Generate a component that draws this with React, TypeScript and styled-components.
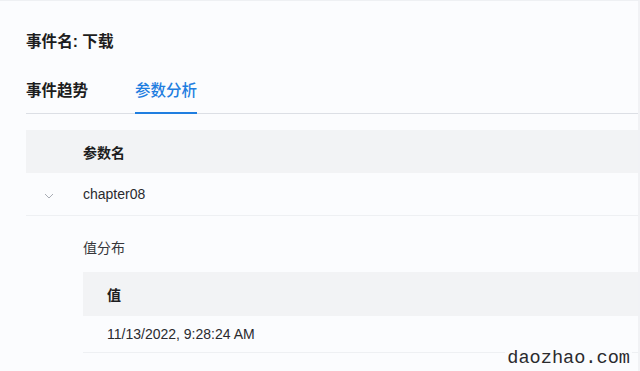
import React from "react";
import styled, { createGlobalStyle } from "styled-components";

const Global = createGlobalStyle`
  html, body { margin: 0; padding: 0; background: #fbfcfe; }
  body { font-family: "Liberation Sans", "Noto Sans CJK SC", Arial, sans-serif; color: #1f1f22; }
`;

const Page = styled.div`
  position: relative;
  width: 640px;
  height: 371px;
  overflow: hidden;
  box-sizing: border-box;
  background: #fbfcfe;
  border-top: 1px solid #eef0f3;
  border-right: 2px solid #f1f2f5;
  padding: 28px 0 0 26px;
`;

const Title = styled.h1`
  margin: 0;
  font-size: 15.6px;
  font-weight: 600;
  line-height: 26px;
  color: #1d1d20;
`;

const Tabs = styled.div`
  display: flex;
  gap: 47px;
  margin-top: 25px;
  border-bottom: 1px solid #dcdfe5;
`;

const Tab = styled.div<{ $active?: boolean }>`
  font-size: 15.5px;
  font-weight: ${(p) => (p.$active ? 500 : 600)};
  color: ${(p) => (p.$active ? "#1f7ee0" : "#1d1d20")};
  line-height: 22px;
  padding-bottom: 10px;
  margin-bottom: -1px;
  border-bottom: 2px solid ${(p) => (p.$active ? "#1f7ee0" : "transparent")};
`;

const Table = styled.div`
  margin-top: 16px;
  display: flex;
  flex-direction: column;
`;

const HeadRow = styled.div<{ $indent: number; $h: number }>`
  display: flex;
  align-items: center;
  height: ${(p) => p.$h}px;
  padding-left: ${(p) => p.$indent}px;
  background: #f2f3f5;
  font-size: 14px;
  font-weight: 600;
  color: #1d1d20;
`;

const BodyRow = styled.div<{ $h: number }>`
  display: flex;
  align-items: center;
  height: ${(p) => p.$h}px;
  border-bottom: 1px solid #eef0f3;
  font-size: 14px;
  color: #2a2a2e;
`;

const ExpandCell = styled.div`
  width: 57px;
  display: flex;
  justify-content: center;
  padding-right: 12px;
  padding-top: 3px;
  box-sizing: border-box;
`;

const Expanded = styled.div`
  padding: 21px 0 0 57px;
`;

const SubTitle = styled.div`
  font-size: 14px;
  color: #36363a;
  line-height: 22px;
`;

const SubTable = styled.div`
  margin-top: 13px;
  display: flex;
  flex-direction: column;
`;

const SubCell = styled.div`
  padding-left: 24px;
`;

const Watermark = styled.div`
  position: absolute;
  right: 6px;
  bottom: 1px;
  font-family: "Liberation Mono", "Courier New", monospace;
  font-size: 18.6px;
  color: #2b2b2e;
  background: rgba(251, 252, 254, 0.9);
  padding: 0 2px;
  line-height: 22px;
`;

const Chevron = () => (
  <svg width="10" height="6" viewBox="0 0 10 6" fill="none">
    <path d="M1 1l4 4 4-4" stroke="#a8acb4" strokeWidth="1" />
  </svg>
);

export default function App() {
  return (
    <>
      <Global />
      <Page>
        <Title>事件名: 下载</Title>
        <Tabs>
          <Tab>事件趋势</Tab>
          <Tab $active>参数分析</Tab>
        </Tabs>
        <Table>
          <HeadRow $indent={57} $h={43}>参数名</HeadRow>
          <BodyRow $h={42}>
            <ExpandCell>
              <Chevron />
            </ExpandCell>
            chapter08
          </BodyRow>
          <Expanded>
            <SubTitle>值分布</SubTitle>
            <SubTable>
              <HeadRow $indent={24} $h={44}>值</HeadRow>
              <BodyRow $h={36}>
                <SubCell>11/13/2022, 9:28:24 AM</SubCell>
              </BodyRow>
            </SubTable>
          </Expanded>
        </Table>
        <Watermark>daozhao.com</Watermark>
      </Page>
    </>
  );
}
